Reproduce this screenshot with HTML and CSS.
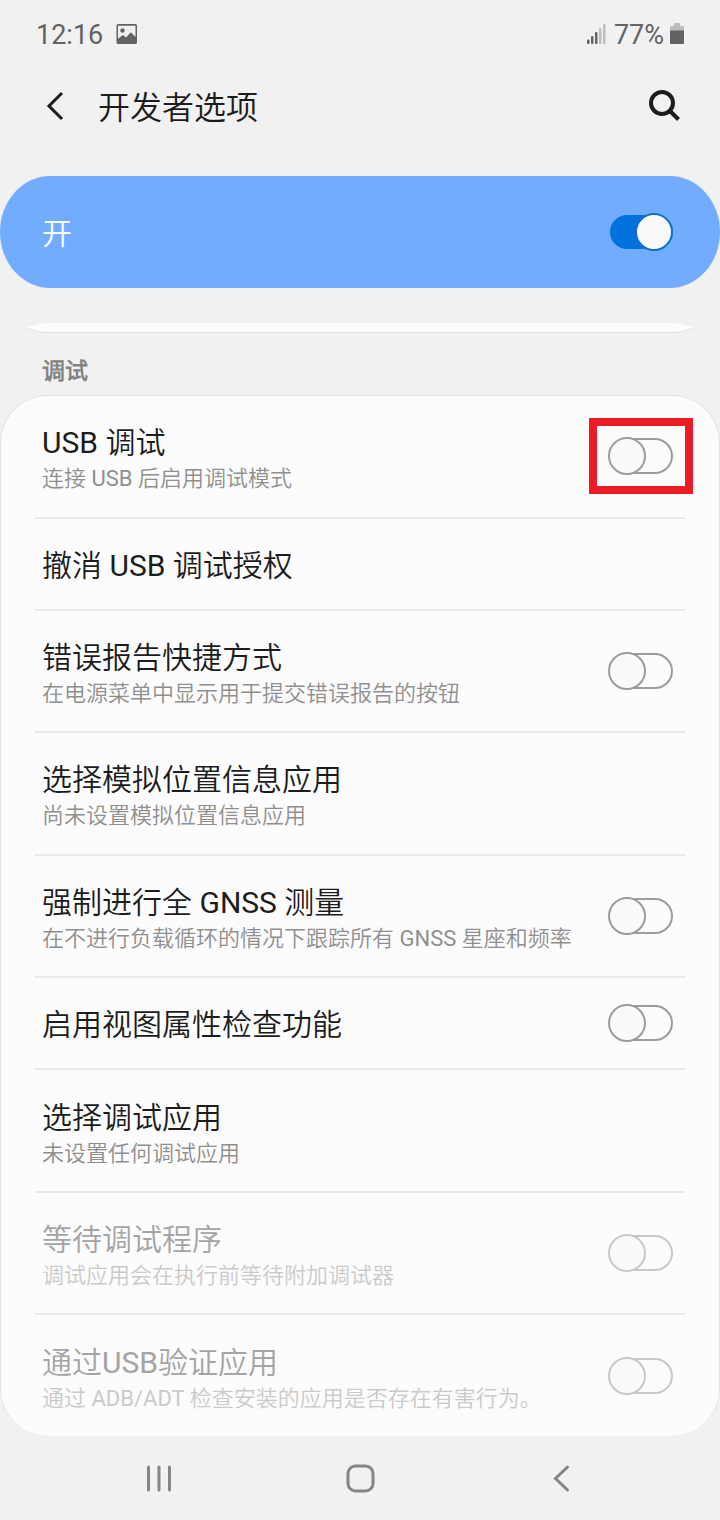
FILE: index.html
```html
<!DOCTYPE html>
<html lang="zh-CN">
<head>
<meta charset="utf-8">
<meta name="viewport" content="width=device-width, initial-scale=1">
<title>开发者选项</title>
<link rel="stylesheet" href="styles.css">
</head>
<body>
<div class="screen">
  <div class="status">
    <div class="status-group status-left">
      <span>12:16</span>
      <svg width="22" height="20" viewBox="0 0 22 20" aria-hidden="true"><path fill="#636363" fill-rule="evenodd" d="M2 0h17.500a1.500 1.500 0 0 1 1.500 1.500v17a1.500 1.500 0 0 1-1.500 1.500h-17.500a1.500 1.500 0 0 1-1.500-1.500v-17a1.500 1.500 0 0 1 1.500-1.500zM2 1.700v13l5-3.700 3 2.500 4.800-5.200 4.700 4.700v-11.300z"/><circle cx="6.500" cy="6.500" r="2.200" fill="#636363"/></svg>
    </div>
    <div class="status-group">
      <svg width="20" height="20" viewBox="0 0 20 20" aria-hidden="true"><g fill="#636363"><rect x="1" y="15.500" width="2.500" height="4.500" rx="1"/><rect x="5" y="12" width="2.500" height="8" rx="1"/><rect x="9" y="8" width="2.500" height="12" rx="1"/></g><g fill="#bdbdbd"><rect x="13" y="4" width="2.500" height="16" rx="1"/><rect x="17" y="0" width="2.500" height="20" rx="1"/></g></svg>
      <span class="battery-text">77%</span>
      <svg width="14" height="22" viewBox="0 0 14 22" aria-hidden="true"><path fill="#bdbdbd" d="M4 0h6v3h3a1 1 0 0 1 1 1v4h-14v-4a1 1 0 0 1 1-1h3z"/><path fill="#636363" d="M0 7.500h14v12.500a1 1 0 0 1-1 1h-12a1 1 0 0 1-1-1z"/></svg>
    </div>
  </div>

  <header class="header">
    <button class="icon-button" aria-label="返回"><svg width="20" height="30" viewBox="0 0 20 30" fill="none" stroke="#1c1c1c" stroke-width="3"><path d="M17 2 4 15 17 28"/></svg></button>
    <h1 class="header-title">开发者选项</h1>
    <button class="icon-button" aria-label="搜索"><svg width="32" height="32" viewBox="0 0 32 32" fill="none" stroke="#1c1c1c"><circle cx="14" cy="13" r="11" stroke-width="4"/><path d="M21.500 20.500 30.500 29.500" stroke-width="4"/></svg></button>
  </header>

  <main class="content">
    <label class="master"><span>开</span><input class="switch" type="checkbox" role="switch" checked></label>

    <div class="list">
      <div class="previous"><div class="previous-card"></div></div>

      <h2 class="section">调试</h2>
      <div class="card">
        <label class="row double"><span class="text"><span class="title">USB 调试</span><span class="sub">连接 USB 后启用调试模式</span></span><span class="highlight"><input class="switch" type="checkbox" role="switch"></span></label>
        <div class="row"><span class="text"><span class="title">撤消 USB 调试授权</span></span></div>
        <label class="row double"><span class="text"><span class="title">错误报告快捷方式</span><span class="sub">在电源菜单中显示用于提交错误报告的按钮</span></span><input class="switch" type="checkbox" role="switch"></label>
        <div class="row double"><span class="text"><span class="title">选择模拟位置信息应用</span><span class="sub">尚未设置模拟位置信息应用</span></span></div>
        <label class="row double"><span class="text"><span class="title">强制进行全 GNSS 测量</span><span class="sub">在不进行负载循环的情况下跟踪所有 GNSS 星座和频率</span></span><input class="switch" type="checkbox" role="switch"></label>
        <label class="row"><span class="text"><span class="title">启用视图属性检查功能</span></span><input class="switch" type="checkbox" role="switch"></label>
        <div class="row double"><span class="text"><span class="title">选择调试应用</span><span class="sub">未设置任何调试应用</span></span></div>
        <label class="row double disabled"><span class="text"><span class="title">等待调试程序</span><span class="sub">调试应用会在执行前等待附加调试器</span></span><input class="switch" type="checkbox" role="switch" disabled></label>
        <label class="row double disabled"><span class="text"><span class="title">通过USB验证应用</span><span class="sub">通过 ADB/ADT 检查安装的应用是否存在有害行为。</span></span><input class="switch" type="checkbox" role="switch" disabled></label>
      </div>
    </div>
  </main>

  <nav class="nav">
    <button class="icon-button" aria-label="最近"><svg width="28" height="28" viewBox="0 0 28 28" fill="none" stroke="#858585" stroke-width="3" stroke-linecap="round"><path d="M3.500 3v23M14 3v23M24.500 3v23"/></svg></button>
    <button class="icon-button" aria-label="主屏幕"><svg width="30" height="30" viewBox="0 0 30 30" fill="none" stroke="#858585" stroke-width="3"><rect x="3" y="3" width="25" height="25" rx="7.500"/></svg></button>
    <button class="icon-button" aria-label="返回上一页"><svg width="18" height="28" viewBox="0 0 18 28" fill="none" stroke="#858585" stroke-width="3" stroke-linecap="round"><path d="M15.500 3 3.500 14.500 15.500 26"/></svg></button>
  </nav>
</div>
</body>
</html>
```
FILE: styles.css
```css
*,
*::before,
*::after {
  box-sizing: border-box;
}

body {
  margin: 0;
  background: #f1f1f1;
  color: #1c1c1c;
  font-family: Roboto, "Noto Sans CJK SC DemiLight", "Noto Sans CJK SC Light", "Noto Sans CJK SC", sans-serif;
}

.screen {
  display: flex;
  flex-direction: column;
  min-height: 100vh;
}

.status {
  display: flex;
  align-items: center;
  justify-content: space-between;
  height: 68px;
  padding: 0 36px;
  color: #636363;
  font-size: 27px;
  line-height: 32px;
}

.status-group {
  display: flex;
  align-items: center;
  gap: 6px;
}

.status-left {
  gap: 13px;
}

.status span {
  padding-top: 2px;
}

.battery-text {
  padding-left: 2px;
}

.header {
  display: flex;
  align-items: center;
  height: 76px;
  padding: 0 40px 0 45px;
}

.header-title {
  flex: 1;
  margin: 0;
  padding: 4px 0 0 33px;
  font-size: 32px;
  font-weight: 400;
  line-height: 40px;
}

.icon-button {
  display: flex;
  padding: 0;
  border: 0;
  background: none;
}

.content {
  display: flex;
  flex: 1;
  flex-direction: column;
}

.master {
  display: flex;
  align-items: center;
  justify-content: space-between;
  height: 112px;
  margin-top: 32px;
  padding: 0 47px 0 42px;
  border-radius: 50px / 56px;
  background: #71acff;
  color: #fcfcfc;
  font-size: 30px;
  line-height: 36px;
}

.master span {
  padding-top: 4px;
}

.list {
  display: flex;
  flex: 1;
  flex-direction: column;
  margin-top: 35px;
  border-radius: 48px;
  overflow: hidden;
}

.previous {
  display: flex;
  align-items: flex-end;
  height: 10px;
  overflow: hidden;
}

.previous-card {
  flex: 1;
  height: 100px;
  border-bottom: 1px solid #dedede;
  border-radius: 48px;
  background: #fcfcfc;
}

.section {
  margin: 0;
  padding: 23px 42px 7px;
  color: #838383;
  font-size: 23px;
  font-weight: 700;
  line-height: 32px;
}

.card {
  display: flex;
  flex: 1;
  flex-direction: column;
  border: 1px solid #e2e2e2;
  border-bottom: 0;
  border-radius: 48px;
  background: #fcfcfc;
}

.row {
  display: flex;
  flex: 1 0 auto;
  align-items: center;
  justify-content: space-between;
  min-height: 92px;
  margin: 0 34px;
  padding: 0 12px 0 7px;
  border-bottom: 2px solid #e8e8e8;
}

.row:last-child {
  border-bottom: 0;
}

.text {
  display: flex;
  flex-direction: column;
  gap: 2px;
  padding-top: 4px;
}

.double .text {
  padding: 29px 0 21px;
}

.title {
  font-size: 30px;
  line-height: 36px;
}

.sub {
  color: #8f8f8f;
  font-size: 22px;
  line-height: 32px;
}

.disabled .title {
  color: #a4a4a4;
}

.disabled .sub {
  color: #cacaca;
}

.switch {
  display: grid;
  flex: none;
  align-items: center;
  width: 65px;
  height: 38px;
  margin: 0;
  appearance: none;
}

.switch::before,
.switch::after {
  grid-area: 1 / 1;
  border: 2px solid #9c9c9c;
  border-radius: 20px;
  content: "";
}

.switch::before {
  height: 36px;
  margin-left: 2px;
}

.switch::after {
  width: 38px;
  height: 38px;
  background: #fafafa;
}

.switch:checked::before {
  height: 34px;
  border-color: #0072de;
  background: #0072de;
}

.switch:checked::after {
  justify-self: end;
  border-color: #1470cc;
}

.switch:disabled::before,
.switch:disabled::after {
  border-color: #c8c8c8;
}

.highlight {
  position: relative;
}

.highlight::after {
  position: absolute;
  inset: -19px -20px -19px -19px;
  border: 8px solid #ec1c24;
  content: "";
  pointer-events: none;
}

.nav {
  display: grid;
  grid-template-columns: repeat(3, 1fr);
  align-items: center;
  justify-items: center;
  height: 84px;
  padding: 0 58px;
}
```
